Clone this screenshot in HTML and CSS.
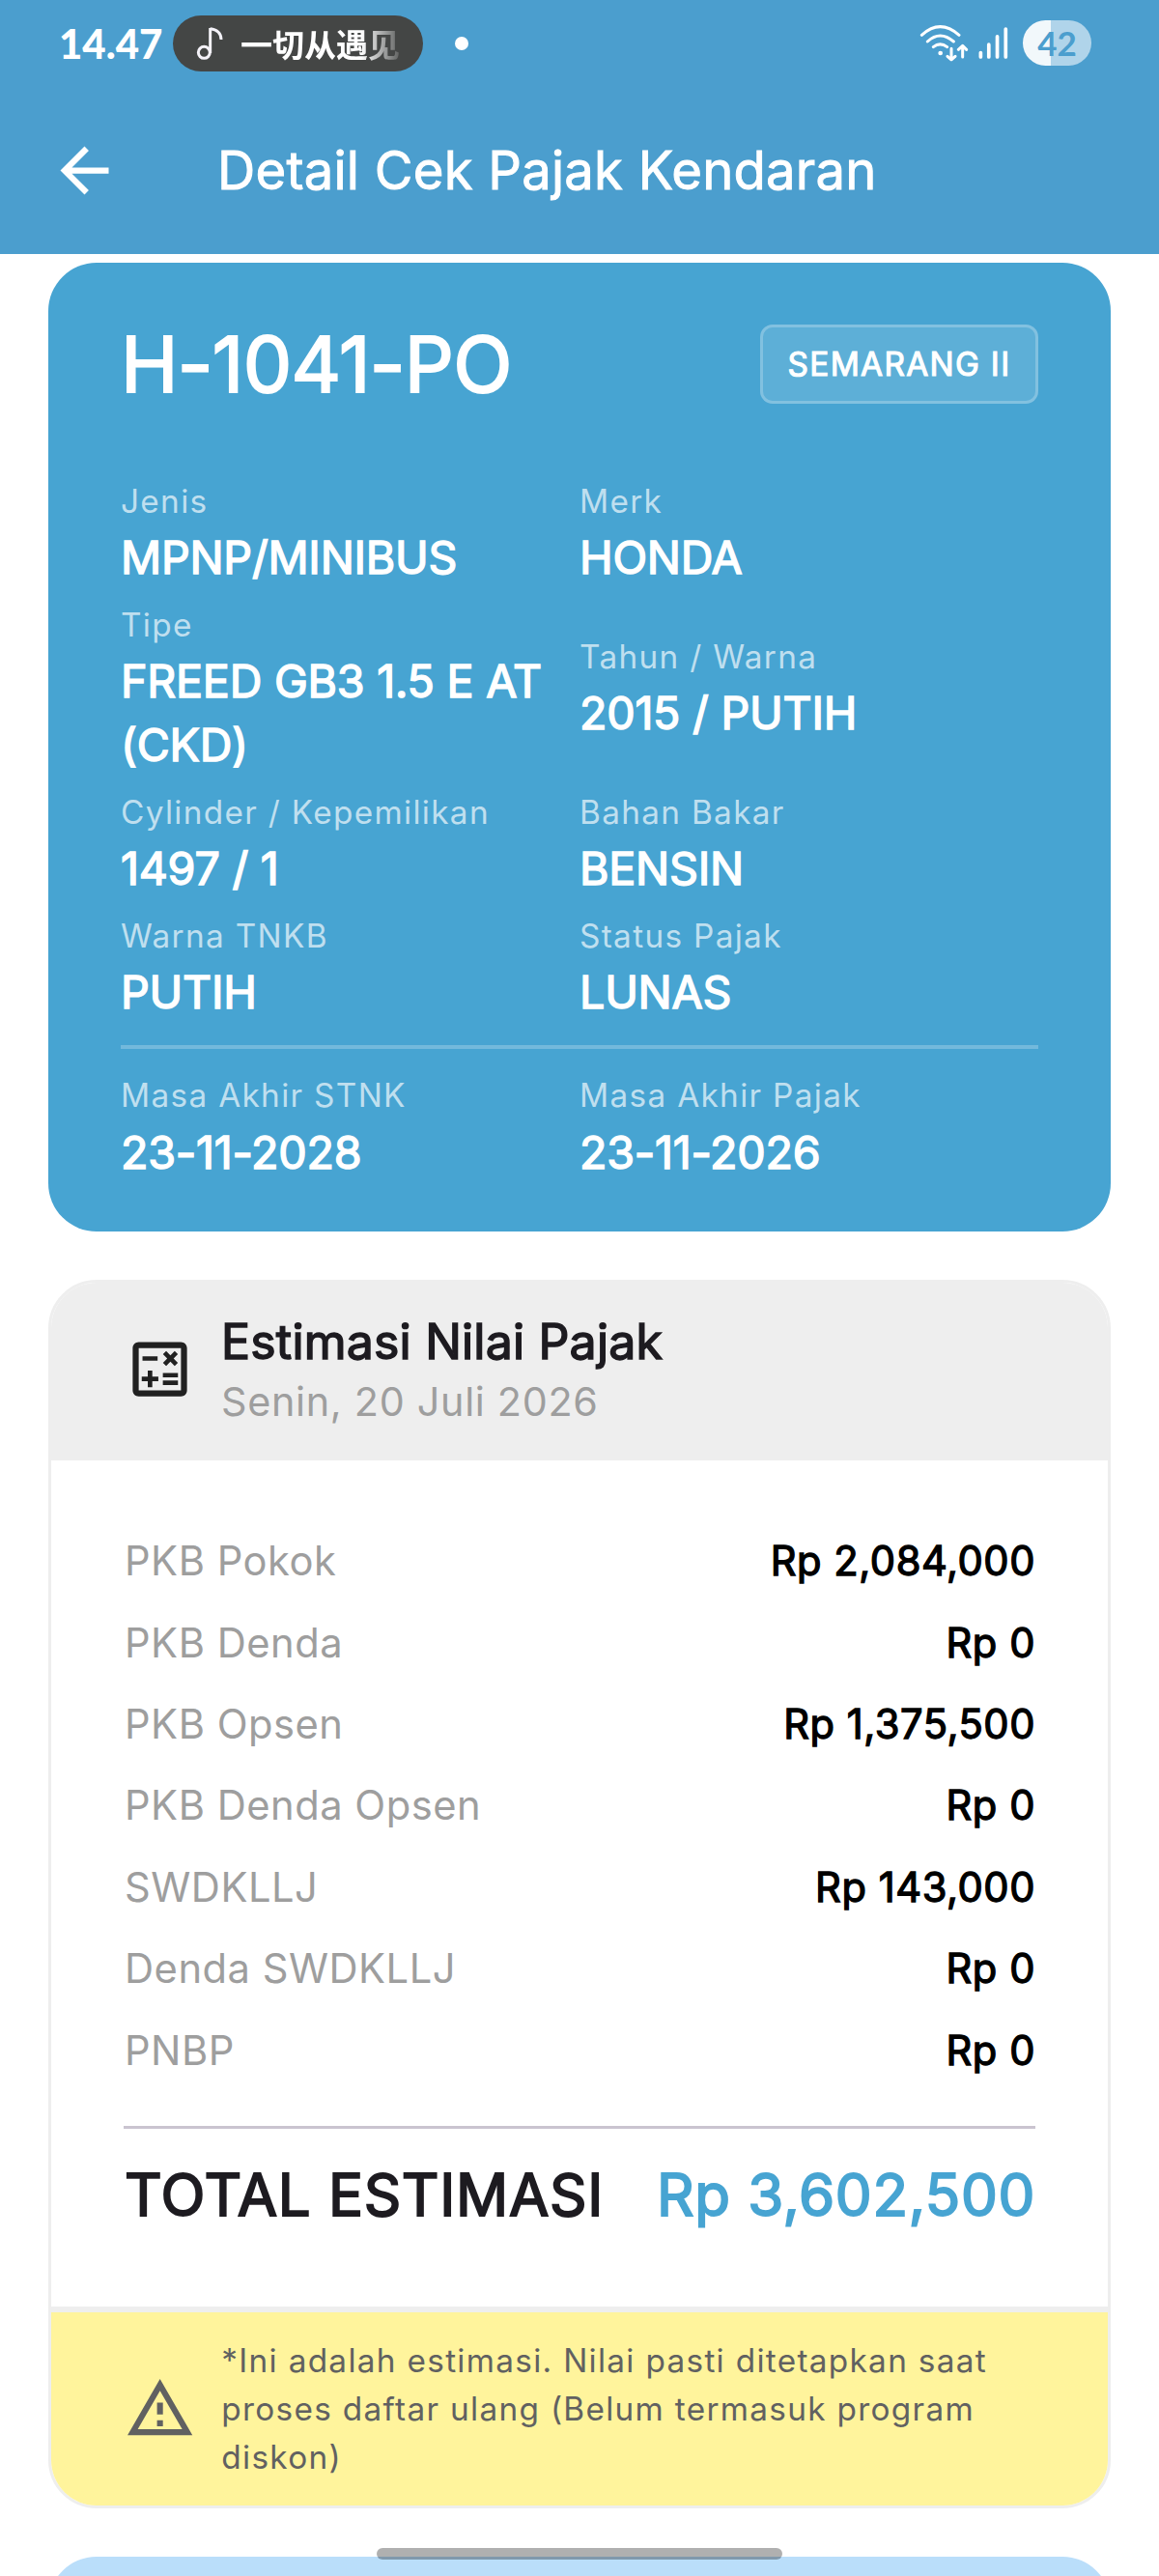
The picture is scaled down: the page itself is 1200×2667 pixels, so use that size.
FILE: index.html
```html
<!DOCTYPE html>
<html lang="id">
<head>
<meta charset="utf-8">
<title>Detail Cek Pajak Kendaran</title>
<link rel="stylesheet" href="styles.css">
</head>
<body>
<div class="screen">
  <header class="header">
    <div class="status">
      <span class="clock">14.47</span>
      <div class="media">
        <svg class="note" viewBox="488 80 84 105" fill="none" stroke="#f4f2f8" stroke-width="9"><circle cx="513" cy="162" r="18"/><path d="M532 164V86"/><path d="M532 88C552 90 566 102 566 122"/></svg>
        <span class="song">一切从遇见</span>
      </div>
      <i class="dot"></i>
      <div class="tray">
        <svg class="wifi" viewBox="97 72 153 117" fill="none" stroke="#fff" stroke-width="9" stroke-linecap="round" stroke-linejoin="round">
          <path d="M104 106Q161 54 220 106M122 126Q161 90 203 126M140 143Q161 126 183 143"/>
          <circle cx="162" cy="162" r="7" fill="#fff" stroke="none"/>
          <path d="M196 148V182M184 172L196 183 208 172M231 174V140M218 151L231 139 243 151"/>
        </svg>
        <svg class="signal" viewBox="280 80 92 104" stroke="#fff" stroke-width="11" stroke-linecap="round"><path d="M287 162V175M312 137V175M338 112V175M364 89V175"/></svg>
        <span class="battery">42</span>
      </div>
    </div>
    <div class="appbar">
      <svg class="back" viewBox="0 0 24 24" fill="#fff"><path d="M20 11H7.83l5.59-5.59L12 4l-8 8 8 8 1.41-1.41L7.83 13H20v-2z"/></svg>
      <h1 class="title">Detail Cek Pajak Kendaran</h1>
    </div>
  </header>

  <main class="content">
    <section class="vehicle">
      <div class="vehicle-head">
        <span class="plate">H-1041-PO</span>
        <span class="badge">SEMARANG II</span>
      </div>
      <div class="grid">
        <div><div class="label">Jenis</div><div class="value">MPNP/MINIBUS</div></div>
        <div><div class="label">Merk</div><div class="value">HONDA</div></div>
        <div><div class="label">Tipe</div><div class="value">FREED GB3 1.5 E AT (CKD)</div></div>
        <div><div class="label">Tahun / Warna</div><div class="value">2015 / PUTIH</div></div>
        <div><div class="label">Cylinder / Kepemilikan</div><div class="value">1497 / 1</div></div>
        <div><div class="label">Bahan Bakar</div><div class="value">BENSIN</div></div>
        <div><div class="label">Warna TNKB</div><div class="value">PUTIH</div></div>
        <div><div class="label">Status Pajak</div><div class="value">LUNAS</div></div>
      </div>
      <div class="grid grid-dates">
        <div><div class="label">Masa Akhir STNK</div><div class="value">23-11-2028</div></div>
        <div><div class="label">Masa Akhir Pajak</div><div class="value">23-11-2026</div></div>
      </div>
    </section>

    <section class="estimate">
      <div class="estimate-head">
        <svg class="calc" viewBox="0 0 24 24" fill="#212121"><path d="M19 3H5c-1.1 0-2 .9-2 2v14c0 1.1.9 2 2 2h14c1.1 0 2-.9 2-2V5c0-1.1-.9-2-2-2zm0 16H5V5h14v14z"/><path d="M6.250 7.720h5v1.500h-5zM13 15.750h5v1.500h-5zM13 13.250h5v1.500h-5zM8 18h1.500v-2h2v-1.500h-2v-2H8v2H6V16h2zM14.090 10.950l1.410-1.410 1.410 1.410 1.060-1.060-1.410-1.420 1.410-1.410L16.910 6 15.500 7.410 14.090 6l-1.060 1.060 1.410 1.410-1.410 1.420z"/></svg>
        <div>
          <h2 class="estimate-title">Estimasi Nilai Pajak</h2>
          <div class="date">Senin, 20 Juli 2026</div>
        </div>
      </div>
      <div class="estimate-body">
        <div class="row"><span>PKB Pokok</span><b class="amount">Rp 2,084,000</b></div>
        <div class="row"><span>PKB Denda</span><b class="amount">Rp 0</b></div>
        <div class="row"><span>PKB Opsen</span><b class="amount">Rp 1,375,500</b></div>
        <div class="row"><span>PKB Denda Opsen</span><b class="amount">Rp 0</b></div>
        <div class="row"><span>SWDKLLJ</span><b class="amount">Rp 143,000</b></div>
        <div class="row"><span>Denda SWDKLLJ</span><b class="amount">Rp 0</b></div>
        <div class="row"><span>PNBP</span><b class="amount">Rp 0</b></div>
        <div class="total"><span>TOTAL ESTIMASI</span><span class="total-amount">Rp 3,602,500</span></div>
      </div>
      <div class="notice">
        <svg class="warn" viewBox="0 0 24 24" fill="#616161"><path d="M12 5.990L19.530 19H4.470L12 5.990M12 2L1 21h22L12 2zm1 14h-2v2h2v-2zm0-6h-2v4h2v-4z"/></svg>
        <p class="notice-text">*Ini adalah estimasi. Nilai pasti ditetapkan saat proses daftar ulang (Belum termasuk program diskon)</p>
      </div>
    </section>

    <section class="next-card"></section>
  </main>
  <div class="home-bar"></div>
</div>
</body>
</html>
```
FILE: styles.css
```css
* { box-sizing: border-box; }
body { margin: 0; background: #fff; font-family: Inter, "Noto Sans CJK SC", sans-serif; color: #1d1b20; }
svg { display: block; flex: none; }
.screen { position: relative; width: 1200px; height: 2667px; overflow: hidden; }

.header { height: 263px; background: #4b9ece; color: #fff; }
.status { display: flex; align-items: center; height: 89px; padding: 0 70px 0 61px; }
.clock { width: 118px; font: 900 42px/48px Lato, sans-serif; }
.media { display: flex; align-items: center; width: 259px; height: 58px; padding: 0 20px 0 24px; border-radius: 29px; background: #444645; }
.note { width: 28px; height: 35px; margin-right: 18px; }
.song { width: 169px; white-space: nowrap; font: 700 33px/48px "Noto Sans CJK JP", sans-serif; -webkit-mask-image: linear-gradient(90deg, #000 125px, transparent 172px); mask-image: linear-gradient(90deg, #000 125px, transparent 172px); }
.dot { width: 14px; height: 14px; margin-left: 33px; border-radius: 50%; background: #fff; }
.tray { display: flex; align-items: center; margin-left: auto; }
.wifi { width: 51px; height: 39px; margin-right: 10px; }
.signal { width: 31px; height: 35px; margin-right: 15px; }
.battery { width: 71px; height: 47px; border-radius: 23.5px; background: linear-gradient(90deg, #f2f8fb 29px, #b0d4ea 29px); color: #4b9ece; text-align: center; font: 700 35px/47px Lato, sans-serif; }

.appbar { display: flex; align-items: center; height: 174px; padding-left: 50px; }
.back { width: 75px; height: 75px; margin-right: 100px; }
.title { margin: 0; font-size: 54.4px; font-weight: 400; line-height: 80px; letter-spacing: .22px; -webkit-text-stroke: .9px; }

.content { padding: 9px 50px 0; }

.vehicle { height: 1002.500px; padding: 55px 75px 0; border-radius: 50px; background: #47a4d2; color: #fff; }
.vehicle-head { display: flex; align-items: center; justify-content: space-between; height: 100px; margin-bottom: 69px; }
.plate { font-size: 80px; line-height: 100px; letter-spacing: -.7px; -webkit-text-stroke: 2px; }
.badge { height: 82px; width: 288px; margin-top: -1px; border: 3px solid rgba(255, 255, 255, .32); border-radius: 13px; background: rgba(255, 255, 255, .12); background-clip: padding-box; text-align: center; font-size: 33.33px; line-height: 76px; letter-spacing: 1.33px; -webkit-text-stroke: 1.1px; }
.grid { display: grid; grid-template-columns: 1fr 1fr; row-gap: 13.6px; align-items: center; }
.label { margin-bottom: 2.3px; color: rgba(255, 255, 255, .66); font-size: 33.33px; line-height: 47px; letter-spacing: 1.33px; }
.value { font-size: 46.67px; line-height: 65.3px; letter-spacing: -.25px; -webkit-text-stroke: 1.45px; }
.grid-dates { margin-top: 22px; padding-top: 25px; border-top: 4px solid rgba(255, 255, 255, .24); }

.estimate { margin-top: 50.500px; border: 3px solid #eee; border-radius: 50px; overflow: hidden; }
.estimate-head { display: flex; align-items: center; height: 184px; padding-left: 75px; background: #eee; }
.calc { width: 75px; height: 75px; margin: -6px 26px 0 0; }
.estimate-title { margin: -1px 0 0; font-size: 50px; font-weight: 400; line-height: 62px; letter-spacing: .2px; -webkit-text-stroke: 1.5px; }
.date { color: #9e9e9e; font-size: 41.3px; line-height: 62px; letter-spacing: .7px; }
.estimate-body { height: 876px; padding: 62px 75px 0; }
.row { display: flex; align-items: center; justify-content: space-between; height: 84.4px; padding-left: 1px; color: #9e9e9e; font-size: 41.67px; letter-spacing: .52px; }
.amount { margin-right: 0; color: #000; font-weight: 400; letter-spacing: .55px; -webkit-text-stroke: 1.3px; }
.total { display: flex; justify-content: space-between; margin-top: 36px; padding: 26px 0 0 1px; border-top: 3px solid #cac4d0; font-size: 60px; line-height: 84px; letter-spacing: .68px; -webkit-text-stroke: 1.9px; }
.total-amount { color: #47a4d2; }
.notice { display: flex; align-items: center; height: 206px; padding: 0 60px 0 75px; border-top: 6px solid #eee; background: #fff49c; color: #616161; }
.warn { width: 73.3px; height: 73.3px; margin: -1px 27px 0 1px; }
.notice-text { margin: -1px 0 0; font-size: 33.33px; line-height: 50px; letter-spacing: 1.31px; }

.next-card { height: 200px; margin-top: 50px; border-radius: 50px; background: #badefa; }
.home-bar { position: absolute; left: 390px; top: 2638px; width: 420px; height: 12px; border-radius: 6px; background: rgba(0, 0, 0, .31); }
```
